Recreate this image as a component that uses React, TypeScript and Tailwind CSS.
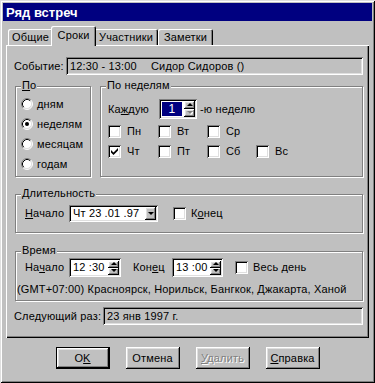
import React from "react";

const SUNKEN =
  "shadow-[inset_1px_1px_#808080,inset_-1px_-1px_#fff,inset_2px_2px_#000,inset_-2px_-2px_#dfdfdf]";
const RAISED =
  "shadow-[inset_-1px_-1px_#000,inset_1px_1px_#fff,inset_-2px_-2px_#808080,inset_2px_2px_#dfdfdf]";
const ETCHED = "border border-[#808080] shadow-[inset_1px_1px_#fff,1px_1px_#fff]";
const TAB =
  "shadow-[inset_1px_1px_#fff,inset_-1px_0_#000,inset_-2px_0_#808080] rounded-t-[2px] bg-[#c0c0c0] flex items-center justify-center";

function Radio({ checked }: { checked?: boolean }) {
  return (
    <svg width="12" height="12" viewBox="0 0 12 12" className="shrink-0">
      <circle cx="6" cy="6" r="5" fill="#fff" />
      <path d="M2.11 9.89A5.5 5.5 0 0 1 9.89 2.11" fill="none" stroke="#808080" />
      <path d="M9.89 2.11A5.5 5.5 0 0 1 2.11 9.89" fill="none" stroke="#fff" />
      <path d="M2.82 9.18A4.5 4.5 0 0 1 9.18 2.82" fill="none" stroke="#000" />
      <path d="M9.18 2.82A4.5 4.5 0 0 1 2.82 9.18" fill="none" stroke="#dfdfdf" />
      {checked && <circle cx="6" cy="6" r="2" fill="#000" />}
    </svg>
  );
}

function Check({ checked }: { checked?: boolean }) {
  return (
    <span className={`w-[13px] h-[13px] shrink-0 bg-white ${SUNKEN} flex items-center justify-center`}>
      {checked && (
        <svg width="7" height="7" viewBox="0 0 7 7">
          <polygon points="0,2 2.5,4.5 7,0 7,2.5 2.5,7 0,4.5" fill="#000" />
        </svg>
      )}
    </span>
  );
}

function Arrow({ up, disabled }: { up?: boolean; disabled?: boolean }) {
  return (
    <svg width="6" height="4" viewBox="0 0 6 4">
      {disabled && (
        <polygon points={up ? "4,1 7,4 1,4" : "1,1 7,1 4,4"} fill="#fff" />
      )}
      <polygon
        points={up ? "3,0 6,3 0,3" : "0,0 6,0 3,3"}
        fill={disabled ? "#808080" : "#000"}
      />
    </svg>
  );
}

function SpinBtns({ downDisabled, h }: { downDisabled?: boolean; h: "8" | "7" }) {
  const cls = h === "8" ? "h-[8px]" : "h-[7px]";
  return (
    <div className="flex flex-col w-[11px] shrink-0">
      <div className={`${cls} bg-[#c0c0c0] ${RAISED} flex items-center justify-center`}>
        <Arrow up />
      </div>
      <div className={`${cls} bg-[#c0c0c0] ${RAISED} flex items-center justify-center`}>
        <Arrow disabled={downDisabled} />
      </div>
    </div>
  );
}

function Group({
  label,
  className,
  children,
}: {
  label: React.ReactNode;
  className: string;
  children: React.ReactNode;
}) {
  return (
    <div className={`relative ${ETCHED} ${className}`}>
      <span className="absolute left-[5px] -top-[8px] bg-[#c0c0c0] px-[1px] leading-[13px]">
        {label}
      </span>
      {children}
    </div>
  );
}

function Button({
  children,
  isDefault,
  disabled,
}: {
  children: React.ReactNode;
  isDefault?: boolean;
  disabled?: boolean;
}) {
  const inner = (
    <div
      className={`h-full w-full bg-[#c0c0c0] ${RAISED} flex items-center justify-center ${
        disabled ? "text-[#808080] [text-shadow:1px_1px_#fff]" : ""
      }`}
    >
      {children}
    </div>
  );
  if (isDefault) {
    return <div className="w-[54px] h-[22px] border border-black">{inner}</div>;
  }
  return <div className="w-[54px] h-[22px]">{inner}</div>;
}

export default function App() {
  return (
    <div className="w-[375px] h-[383px] bg-[#c0c0c0] p-[3px] shadow-[inset_1px_1px_#dfdfdf,inset_-1px_-1px_#000,inset_2px_2px_#fff,inset_-2px_-2px_#808080] font-['Liberation_Sans',Arial,sans-serif] text-[11px] tracking-[0.15px] text-black leading-[13px] flex flex-col">
      {/* Title bar */}
      <div className="h-[18px] bg-[#000080] flex items-center pl-[3px]">
        <span className="text-white font-bold text-[13px] tracking-[0px]">Ряд встреч</span>
      </div>

      <div className="px-[3px] mt-[5px] flex flex-col">
        {/* Tabs */}
        <div className="flex items-end h-[19px] pl-[2px]">
          <div className={`${TAB} w-[45px] h-[16px]`}>Общие</div>
          <div className={`${TAB} relative z-10 w-[45px] h-[20px] -mx-[2px] -mb-[1px] pb-[2px]`}>
            Сроки
          </div>
          <div className={`${TAB} w-[64px] h-[16px]`}>Участники</div>
          <div className={`${TAB} w-[55px] h-[16px]`}>Заметки</div>
        </div>

        {/* Panel */}
        <div className="h-[293px] shadow-[inset_1px_1px_#fff,inset_-1px_-1px_#000,inset_-2px_-2px_#808080] pt-[12px] pl-[9px] pr-[6px] flex flex-col">
          {/* Событие */}
          <div className="flex items-center h-[18px]">
            <span className="w-[52px] -ml-[1px]">Событие:</span>
            <div className={`flex-1 h-[18px] ${SUNKEN} flex items-center pl-[4px]`}>
              <span className="w-[81px]">12:30 - 13:00</span>
              <span>Сидор Сидоров ()</span>
            </div>
          </div>

          {/* Groups row */}
          <div className="flex mt-[11px] h-[91px]">
            <Group
              className="w-[76px] h-[91px] pt-[7px] pl-[5px]"
              label={
                <>
                  <u>П</u>о
                </>
              }
            >
              {["дням", "неделям", "месяцам", "годам"].map((t, i) => (
                <div key={t} className="h-[20px] flex items-center gap-[4px]">
                  <Radio checked={i === 1} />
                  <span>{t}</span>
                </div>
              ))}
            </Group>

            <Group className="flex-1 ml-[9px] h-[91px] pt-[12px] pl-[7px]" label="По неделям">
              <div className="flex items-center h-[20px]">
                <span className="w-[51px]">
                  Ка<u>ж</u>дую
                </span>
                <div className={`w-[38px] h-[20px] bg-white ${SUNKEN} flex items-center pl-[3px] pr-[2px] gap-[2px]`}>
                  <div className="w-[20px] h-[14px] bg-[#000080] text-white flex items-center justify-center text-[12px]">
                    1
                  </div>
                  <SpinBtns downDisabled h="8" />
                </div>
                <span className="ml-[3px]">-ю неделю</span>
              </div>
              <div className="mt-[6px] flex flex-col gap-[7px]">
                <div className="flex h-[13px]">
                  <div className="w-[50px] flex items-center gap-[6px]">
                    <Check />
                    <span>Пн</span>
                  </div>
                  <div className="w-[49px] flex items-center gap-[6px]">
                    <Check />
                    <span>Вт</span>
                  </div>
                  <div className="w-[49px] flex items-center gap-[6px]">
                    <Check />
                    <span>Ср</span>
                  </div>
                </div>
                <div className="flex h-[13px]">
                  <div className="w-[50px] flex items-center gap-[6px]">
                    <Check checked />
                    <span>Чт</span>
                  </div>
                  <div className="w-[49px] flex items-center gap-[6px]">
                    <Check />
                    <span>Пт</span>
                  </div>
                  <div className="w-[49px] flex items-center gap-[6px]">
                    <Check />
                    <span>Сб</span>
                  </div>
                  <div className="w-[49px] flex items-center gap-[6px]">
                    <Check />
                    <span>Вс</span>
                  </div>
                </div>
              </div>
            </Group>
          </div>

          {/* Длительность */}
          <Group className="mt-[17px] h-[39px] pt-[10px] pl-[9px]" label="Длительность">
            <div className="flex items-center h-[17px]">
              <span className="w-[44px]">
                <u>Н</u>ачало
              </span>
              <div className={`w-[89px] h-[17px] bg-white ${SUNKEN} flex items-center pl-[4px] pr-[2px]`}>
                <span className="flex-1">Чт 23 .01 .97</span>
                <div className={`w-[11px] h-[13px] bg-[#c0c0c0] ${RAISED} flex items-center justify-center`}>
                  <Arrow />
                </div>
              </div>
              <div className="ml-[15px] flex items-center gap-[5px]">
                <Check />
                <span>
                  К<u>о</u>нец
                </span>
              </div>
            </div>
          </Group>

          {/* Время */}
          <Group className="mt-[18px] h-[50px] pt-[6px] pl-[9px]" label="Время">
            <div className="flex items-center h-[19px]">
              <span className="w-[44px]">
                На<u>ч</u>ало
              </span>
              <div className={`w-[52px] h-[19px] bg-white ${SUNKEN} flex items-center pl-[4px] pr-[2px]`}>
                <span className="flex-1">12 :30</span>
                <SpinBtns h="7" />
              </div>
              <span className="ml-[12px] w-[39px]">
                Кон<u>е</u>ц
              </span>
              <div className={`w-[51px] h-[19px] bg-white ${SUNKEN} flex items-center pl-[4px] pr-[2px]`}>
                <span className="flex-1">13 :00</span>
                <SpinBtns h="7" />
              </div>
              <div className="ml-[12px] flex items-center gap-[5px]">
                <Check />
                <span>Весь день</span>
              </div>
            </div>
            <div className="mt-[5px] -ml-[8px] h-[14px] flex items-center">
              (GMT+07:00) Красноярск, Норильск, Бангкок, Джакарта, Ханой
            </div>
          </Group>

          {/* Следующий раз */}
          <div className="flex items-center mt-[6px] h-[18px]">
            <span className="w-[89px] -ml-[1px]">Следующий раз:</span>
            <div className={`flex-1 h-[18px] ${SUNKEN} flex items-center pl-[4px]`}>
              23 янв 1997 г.
            </div>
          </div>
        </div>

        {/* Buttons */}
        <div className="mt-[9px] flex justify-center gap-[16px] h-[22px]">
          <Button isDefault>
            <span>
              O<u>K</u>
            </span>
          </Button>
          <Button>Отмена</Button>
          <Button disabled>
            <span>
              <u>У</u>далить
            </span>
          </Button>
          <Button>
            <span>
              <u>С</u>правка
            </span>
          </Button>
        </div>
      </div>
    </div>
  );
}
